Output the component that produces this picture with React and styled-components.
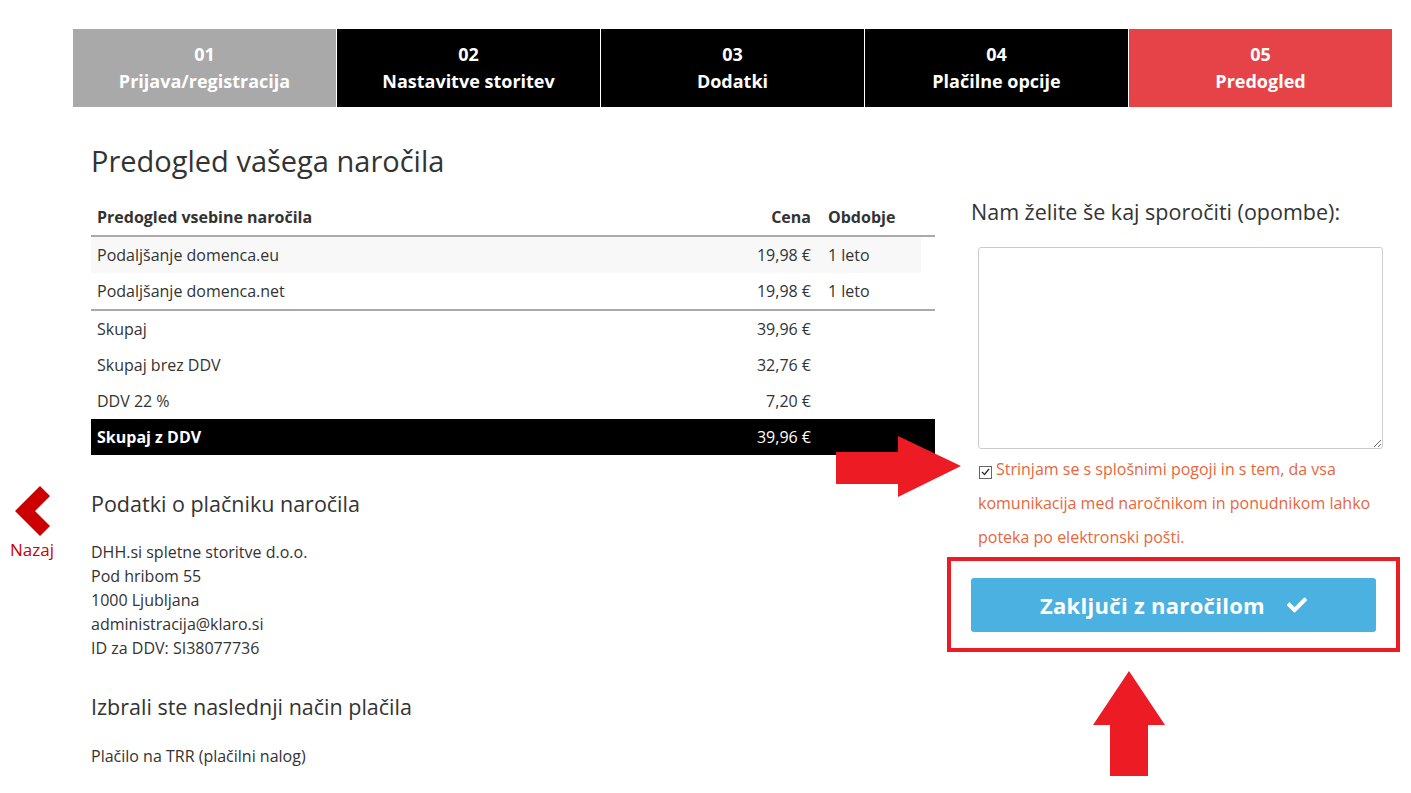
import React from "react";
import styled, { createGlobalStyle } from "styled-components";
import { FaCheck } from "react-icons/fa";

const GlobalStyle = createGlobalStyle`
  html, body {
    margin: 0;
    padding: 0;
    background: #fff;
  }
  body {
    font-family: "Open Sans", "Noto Sans", "Liberation Sans", sans-serif;
    color: #333;
  }
`;

const Page = styled.div`
  position: relative;
  display: flex;
  width: 1411px;
  min-height: 793px;
  overflow: hidden;
`;

const Side = styled.div`
  width: 73px;
  flex: none;
  display: flex;
  flex-direction: column;
  align-items: flex-start;
  padding-top: 486px;
  box-sizing: border-box;
`;

const BackLink = styled.a`
  display: flex;
  flex-direction: column;
  align-items: center;
  width: 64px;
  color: #cc0000;
  font-size: 17px;
  text-decoration: none;
  gap: 2px;
`;

const Main = styled.div`
  width: 1319px;
  padding-top: 29px;
`;

const Steps = styled.div`
  display: grid;
  grid-template-columns: repeat(5, 1fr);
  gap: 1px;
  background: #fff;
`;

const Step = styled.div`
  height: 78px;
  display: flex;
  flex-direction: column;
  align-items: center;
  justify-content: center;
  color: #fff;
  font-weight: 700;
  font-size: 18px;
  line-height: 27px;
  background: ${(p) =>
    p.$state === "done" ? "#a9a9a9" : p.$state === "active" ? "#e54348" : "#000"};
`;

const Content = styled.div`
  display: grid;
  grid-template-columns: 844px 1fr;
  padding-left: 18px;
  column-gap: 36px;
`;

const Left = styled.div`
  padding-top: 36px;
`;

const Right = styled.div`
  padding-top: 91px;
  padding-right: 10px;
`;

const Title = styled.h1`
  margin: 0 0 20px;
  font-size: 29px;
  font-weight: 500;
  line-height: 36px;
  color: #333;
`;

const Table = styled.table`
  width: 100%;
  border-collapse: collapse;
  font-size: 16px;
  color: #333;
`;

const Th = styled.th`
  height: 36px;
  padding: 0 6px 0 ${(p) => p.$pl || "6px"};
  font-weight: 700;
  text-align: ${(p) => (p.$right ? "right" : "left")};
  border-bottom: 2px solid #aaa;
  width: ${(p) => p.$w || "auto"};
`;

const Row = styled.tr`
  td {
    height: 36px;
    padding: 0 6px;
    white-space: nowrap;
  }
  td:nth-child(3) {
    padding-left: 11px;
  }
  td:not(:last-child) {
    background: ${(p) => (p.$striped ? "#f8f8f8" : "transparent")};
  }
  ${(p) => p.$divider && "td { border-bottom: 2px solid #aaa; }"}
  ${(p) =>
    p.$total &&
    `td { background: #000 !important; color: #fff; } td:first-child { font-weight: 700; }`}
`;

const Num = styled.td`
  text-align: right;
`;

const SectionTitle = styled.h2`
  margin: ${(p) => p.$m || "0"};
  font-size: 21.5px;
  font-weight: 500;
  line-height: 28px;
  color: #333;
`;

const Lines = styled.div`
  font-size: 16px;
  line-height: 24px;
  color: #333;
`;

const Textarea = styled.textarea`
  display: block;
  box-sizing: border-box;
  width: 405px;
  height: 202px;
  margin: 21px 0 0 7px;
  border: 1px solid #ccc;
  border-radius: 3px;
  resize: both;
  font-family: inherit;
`;

const Terms = styled.label`
  display: block;
  margin: 3px 0 0 7px;
  width: 424px;
  font-size: 16px;
  line-height: 34px;
  color: #e8663e;
`;

const CheckBox = styled.span`
  display: inline-flex;
  align-items: center;
  justify-content: center;
  box-sizing: border-box;
  width: 13px;
  height: 13px;
  margin: 0 4px 0 1px;
  vertical-align: -1px;
  border: 1px solid #666;
  background: #fff;
`;

const Submit = styled.button`
  display: flex;
  align-items: center;
  justify-content: center;
  gap: 22px;
  width: 405px;
  height: 54px;
  margin-top: 24px;
  border: 0;
  border-radius: 3px;
  background: #4ab1e0;
  color: #fff;
  font-family: inherit;
  font-size: 22px;
  font-weight: 700;
  letter-spacing: 0.3px;
  cursor: pointer;
`;

const Highlight = styled.div`
  position: absolute;
  left: 947px;
  top: 557px;
  width: 453px;
  height: 95px;
  box-sizing: border-box;
  border: 4px solid #ed1c24;
  pointer-events: none;
`;

const Arrow = styled.svg`
  position: absolute;
  left: ${(p) => p.$x}px;
  top: ${(p) => p.$y}px;
  pointer-events: none;
`;

const items = [
  { name: "Podaljšanje domenca.eu", price: "19,98 €", period: "1 leto" },
  { name: "Podaljšanje domenca.net", price: "19,98 €", period: "1 leto" },
];

const totals = [
  { name: "Skupaj", price: "39,96 €" },
  { name: "Skupaj brez DDV", price: "32,76 €" },
  { name: "DDV 22 %", price: "7,20 €" },
];

const steps = [
  ["01", "Prijava/registracija", "done"],
  ["02", "Nastavitve storitev", ""],
  ["03", "Dodatki", ""],
  ["04", "Plačilne opcije", ""],
  ["05", "Predogled", "active"],
];

export default function App() {
  return (
    <>
      <GlobalStyle />
      <Page>
        <Side>
          <BackLink href="#">
            <svg width="36" height="50" viewBox="0 0 36 50">
              <polygon points="26,0 36,10 21,25 36,40 26,50 1,25" fill="#cc0000" />
            </svg>
            Nazaj
          </BackLink>
        </Side>
        <Main>
          <Steps>
            {steps.map(([n, label, state]) => (
              <Step key={n} $state={state}>
                <span>{n}</span>
                <span>{label}</span>
              </Step>
            ))}
          </Steps>
          <Content>
            <Left>
              <Title>Predogled vašega naročila</Title>
              <Table>
                <thead>
                  <tr>
                    <Th>Predogled vsebine naročila</Th>
                    <Th $right $w="90px">Cena</Th>
                    <Th $w="87px" $pl="11px">Obdobje</Th>
                    <Th $w="2px" />
                  </tr>
                </thead>
                <tbody>
                  {items.map((it, i) => (
                    <Row key={it.name} $striped={i === 0} $divider={i === items.length - 1}>
                      <td>{it.name}</td>
                      <Num>{it.price}</Num>
                      <td>{it.period}</td>
                      <td />
                    </Row>
                  ))}
                  {totals.map((t) => (
                    <Row key={t.name}>
                      <td>{t.name}</td>
                      <Num>{t.price}</Num>
                      <td />
                      <td />
                    </Row>
                  ))}
                  <Row $total>
                    <td>Skupaj z DDV</td>
                    <Num>39,96 €</Num>
                    <td />
                    <td />
                  </Row>
                </tbody>
              </Table>

              <SectionTitle $m="35px 0 22px">Podatki o plačniku naročila</SectionTitle>
              <Lines>
                DHH.si spletne storitve d.o.o.
                <br />
                Pod hribom 55
                <br />
                1000 Ljubljana
                <br />
                administracija@klaro.si
                <br />
                ID za DDV: SI38077736
              </Lines>

              <SectionTitle $m="33px 0 23px">Izbrali ste naslednji način plačila</SectionTitle>
              <Lines>Plačilo na TRR (plačilni nalog)</Lines>
            </Left>

            <Right>
              <SectionTitle>Nam želite še kaj sporočiti (opombe):</SectionTitle>
              <Textarea />
              <Terms>
                <CheckBox>
                  <svg width="9" height="8" viewBox="0 0 9 8">
                    <polyline points="1,4 3.5,6.5 8,1" fill="none" stroke="#333" strokeWidth="1.4" />
                  </svg>
                </CheckBox>
                Strinjam se s splošnimi pogoji in s tem, da vsa komunikacija med naročnikom in
                ponudnikom lahko poteka po elektronski pošti.
              </Terms>
              <Submit>
                Zaključi z naročilom
                <FaCheck size={20} />
              </Submit>
            </Right>
          </Content>
        </Main>

        <Highlight />
        <Arrow $x={836} $y={436} width="126" height="62" viewBox="0 0 126 62">
          <polygon points="0,16 62,16 62,0 125,30 62,61 62,48 0,48" fill="#ed1c24" />
        </Arrow>
        <Arrow $x={1092} $y={671} width="74" height="106" viewBox="0 0 74 106">
          <polygon points="37,0 73,54 56,54 56,105 18,105 18,54 1,54" fill="#ed1c24" />
        </Arrow>
      </Page>
    </>
  );
}
